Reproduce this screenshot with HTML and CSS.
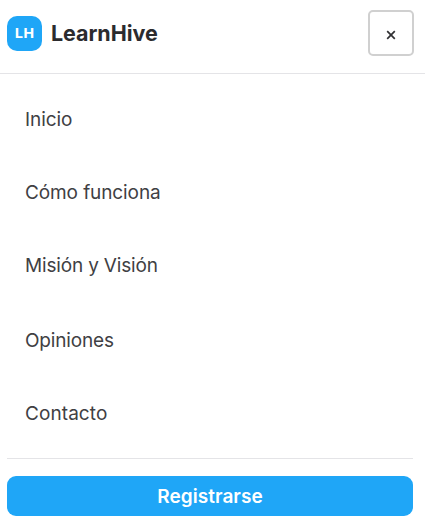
FILE: index.html
```html
<!DOCTYPE html>
<html lang="es">
<head>
<meta charset="utf-8">
<title>LearnHive</title>
<link rel="stylesheet" href="styles.css">
</head>
<body>
<header class="header">
  <div class="brand"><span class="logo">LH</span><span class="name">LearnHive</span></div>
  <button class="close" aria-label="Cerrar"><svg width="10" height="10" viewBox="0 0 10 10"><path d="M1.2 1.2 8.8 8.8M8.8 1.2 1.2 8.8"/></svg></button>
</header>
<nav class="menu">
  <a class="link inicio">Inicio</a>
  <a class="link como">Cómo funciona</a>
  <a class="link mision">Misión y Visión</a>
  <a class="link opiniones">Opiniones</a>
  <a class="link contacto">Contacto</a>
</nav>
<footer class="footer"><button class="register">Registrarse</button></footer>
</body>
</html>
```
FILE: styles.css
```css
* { box-sizing: border-box; }
body { margin: 0; background: #fff; color: #404043; font-family: Inter, "Liberation Sans", sans-serif; height: 522px; overflow: hidden; }
.header { height: 74px; padding: 0 11px 7px 7px; border-bottom: 1px solid #e4e4e7; display: flex; align-items: center; justify-content: space-between; }
.brand { display: flex; align-items: center; gap: 9px; }
.logo { width: 35px; height: 35px; border-radius: 10px; background: #1fa6f7; color: #fff; font: 700 15px/33px "Noto Sans", sans-serif; text-align: center; }
.name { font-size: 21.5px; font-weight: 700; line-height: 36px; letter-spacing: -0.05px; color: #2b2b2e; }
.close { width: 46px; height: 46px; padding: 3px 0 0; border: 2px solid #d0d0d0; border-radius: 5px; background: #fff; display: flex; align-items: center; justify-content: center; }
.close path { stroke: #303033; stroke-width: 1.7; fill: none; }
.menu { margin: 0 12px 0 7px; padding: 8px 18px 9px; border-bottom: 1px solid #e4e4e7; display: grid; grid-template-rows: 73px 73px 75px 73px 73px; }
.link { line-height: 76px; font-size: 19px; letter-spacing: -0.1px; white-space: nowrap; }
.mision, .opiniones { letter-spacing: -0.17px; }
.contacto { letter-spacing: 0.08px; }
.footer { padding: 17px 12px 0 7px; }
.register { display: block; width: 100%; height: 40px; padding: 1px 0 0; border: 0; border-radius: 9px; background: #1fa6f7; color: #fff; font: 600 19px/39px Inter, "Liberation Sans", sans-serif; letter-spacing: 0.05px; }
```
